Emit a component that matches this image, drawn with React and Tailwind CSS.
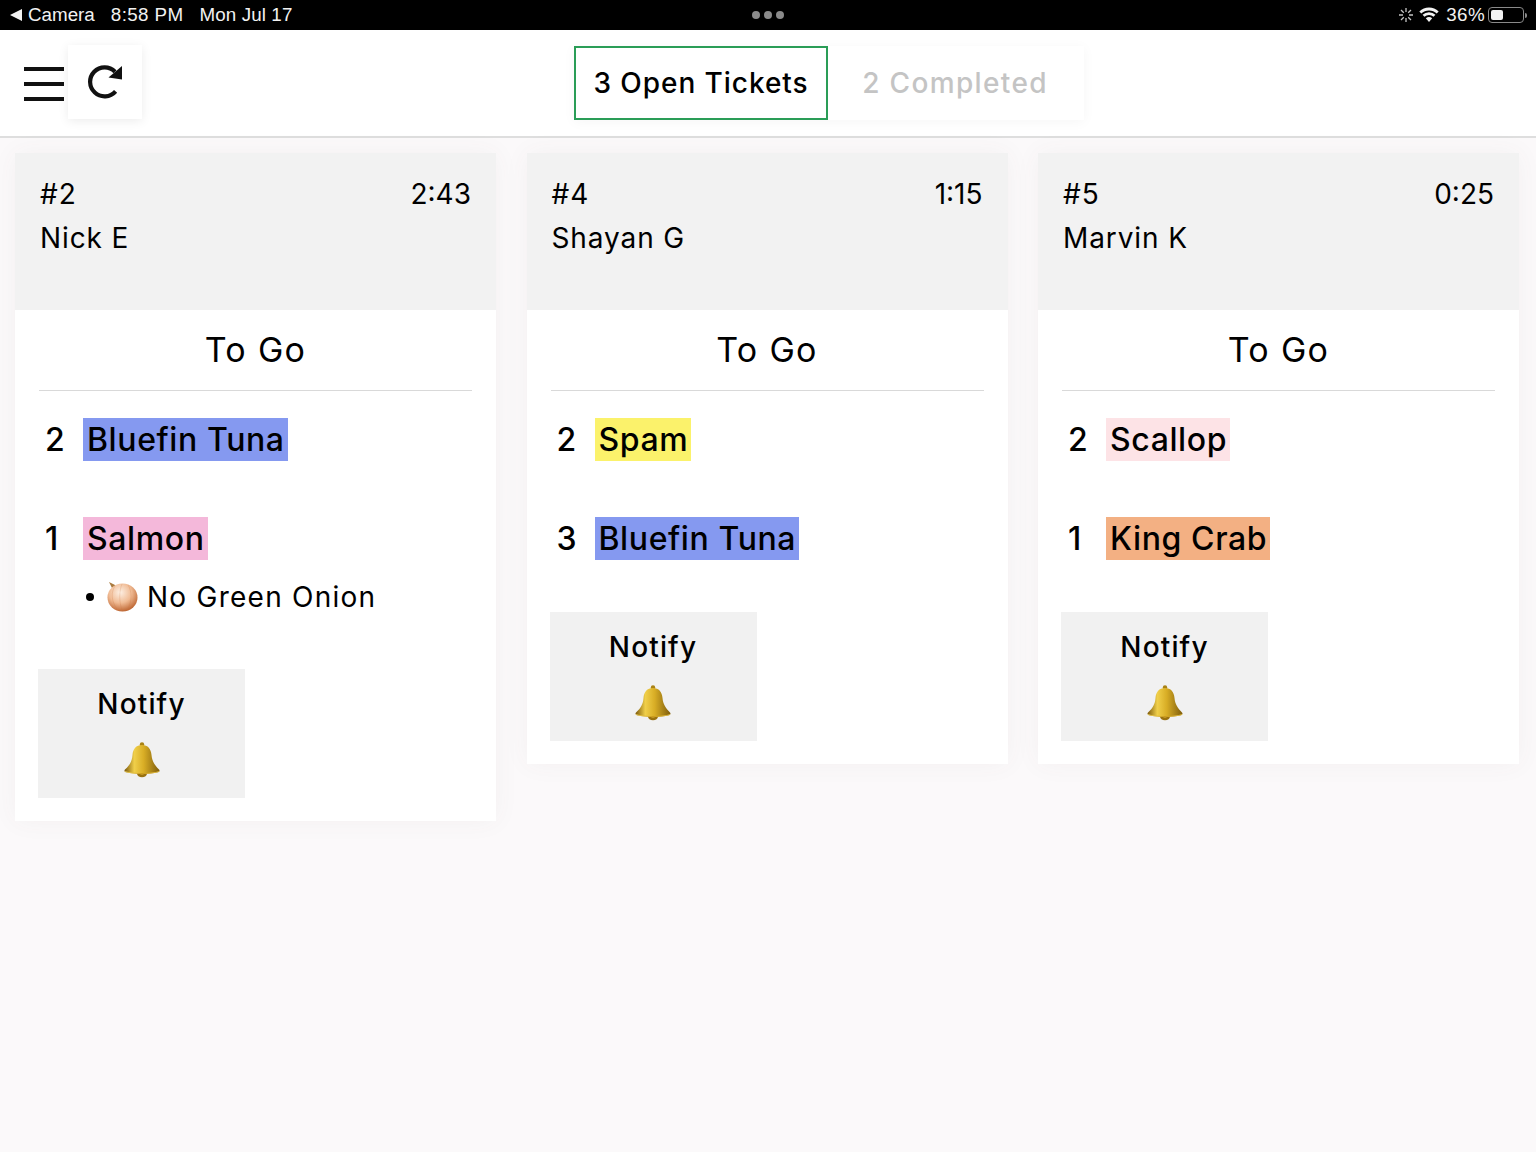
import React from 'react';

const tickets = [
  {
    id: '#2',
    time: '2:43',
    name: 'Nick E',
    items: [
      { qty: 2, label: 'Bluefin Tuna', color: 'bg-[#8599f0]' },
      { qty: 1, label: 'Salmon', color: 'bg-[#f4b8da]', note: 'No Green Onion' },
    ],
  },
  {
    id: '#4',
    time: '1:15',
    name: 'Shayan G',
    items: [
      { qty: 2, label: 'Spam', color: 'bg-[#fbf26b]' },
      { qty: 3, label: 'Bluefin Tuna', color: 'bg-[#8599f0]' },
    ],
  },
  {
    id: '#5',
    time: '0:25',
    name: 'Marvin K',
    items: [
      { qty: 2, label: 'Scallop', color: 'bg-[#fde3e6]' },
      { qty: 1, label: 'King Crab', color: 'bg-[#f3b083]' },
    ],
  },
];

const Bell = () => (
  <svg width="38" height="36" viewBox="0 0 38 36">
    <defs>
      <linearGradient id="bellGold" x1="0" x2="1" y1="0" y2="0">
        <stop offset="0" stopColor="#7d5a0c" />
        <stop offset="0.28" stopColor="#f0cf4a" />
        <stop offset="0.55" stopColor="#d8ad25" />
        <stop offset="1" stopColor="#7f5d0c" />
      </linearGradient>
      <linearGradient id="bellLip" x1="0" x2="1" y1="0" y2="0">
        <stop offset="0" stopColor="#f4d862" />
        <stop offset="0.5" stopColor="#c99a1c" />
        <stop offset="1" stopColor="#f0cc4c" />
      </linearGradient>
    </defs>
    <circle cx="19" cy="2.500" r="2.200" fill="#a98214" />
    <ellipse cx="19" cy="31.500" rx="5" ry="3.800" fill="#9a7210" />
    <ellipse cx="19" cy="31" rx="2.500" ry="1.800" fill="#d6ab2a" />
    <path
      d="M19 3c6 0 9 4 9.500 10 .5 6 3 10 7.500 14.500 1 1.200.5 2.200-1 2.700-9 2.300-23 2.300-32 0-1.500-.5-2-1.500-1-2.700C7 23 9 19 9.500 13 10 7 13 3 19 3z"
      fill="url(#bellGold)"
    />
    <path d="M1.500 29c9 2.800 26 2.800 35 0-.2.700-.8 1-1.500 1.200-9 2.300-23 2.300-32 0-.7-.2-1.300-.5-1.500-1.200z" fill="url(#bellLip)" />
  </svg>
);

const Onion = () => (
  <svg width="32" height="30" viewBox="0 0 32 30">
    <defs>
      <radialGradient id="onionSkin" cx="0.42" cy="0.32" r="0.75">
        <stop offset="0" stopColor="#fdf0e4" />
        <stop offset="0.5" stopColor="#f0bb94" />
        <stop offset="1" stopColor="#b4551f" />
      </radialGradient>
    </defs>
    <path d="M3 0l6 3 3 5-6-2z" fill="#a97a3e" />
    <ellipse cx="16.500" cy="15.500" rx="15" ry="14" fill="url(#onionSkin)" />
    <path d="M9 4c-4 6-4 15 2 23M16 2c-3 7-3 18 0 26M22 3c4 6 4 16 0 24" fill="none" stroke="#c9743e" strokeWidth="0.700" opacity="0.3" />
  </svg>
);

const Ticket = ({ ticket }) => (
  <div className="bg-white shadow-[0_0_24px_rgba(90,70,80,0.05)]">
    <div className="h-[157px] bg-[#f2f2f2] px-[25px] pt-[19px] text-[28px] leading-[44px] tracking-[0.9px] text-black">
      <div className="flex justify-between">
        <span>{ticket.id}</span>
        <span className="tracking-normal">{ticket.time}</span>
      </div>
      <div>{ticket.name}</div>
    </div>
    <div className="px-[24px] pb-[23px]">
      <div className="h-[81px] border-b border-[#d9d9d9] pt-[17px] text-center text-[34px] leading-[46px] tracking-[1.300px] text-black">
        To Go
      </div>
      <div className="flex flex-col gap-[56px] pt-[27px]">
        {ticket.items.map((item) => (
          <div key={item.label}>
            <div className="flex h-[43px] items-center text-[32px] font-[450] tracking-[0.6px] text-black">
              <span className="w-[44px] pl-[6px]">{item.qty}</span>
              <span className={`${item.color} pl-[4px] pr-[3px] leading-[43px]`}>{item.label}</span>
            </div>
            {item.note && (
              <div className="mt-[15px] flex h-[43px] items-center pl-[47px] text-[28px] tracking-[1.250px] text-black">
                <span className="mr-[12px] size-[8px] rounded-full bg-black" />
                <Onion />
                <span className="ml-[9px]">{item.note}</span>
              </div>
            )}
          </div>
        ))}
      </div>
      <div className={`${ticket.items[1].note ? 'mt-[51px]' : 'mt-[52px]'} ml-[-1px] flex h-[129px] w-[207px] flex-col items-center bg-[#f1f1f1] pt-[15px]`}>
        <span className="text-[28px] font-[450] leading-[40px] tracking-[1.150px] text-black">Notify</span>
        <span className="mt-[18px]">
          <Bell />
        </span>
      </div>
    </div>
  </div>
);

const App = () => {
  return (
    <div className="flex min-h-[1152px] flex-col bg-[#fbf9fa] font-['Inter',sans-serif]">
      <div className="relative flex h-[30px] items-center justify-between bg-black pl-[10px] pr-[9px] font-['Liberation_Sans',sans-serif] text-[18.800px] text-[#f2f2f2]">
        <div className="flex items-center">
          <svg width="12" height="12" viewBox="0 0 12 12" className="mr-[6px]">
            <path d="M12 0v12L0 6z" fill="#f2f2f2" />
          </svg>
          <span>Camera</span>
          <span className="ml-[16px] tracking-[0.4px]">8:58 PM</span>
          <span className="ml-[16px] tracking-[0.1px]">Mon Jul 17</span>
        </div>
        <div className="absolute left-[752px] top-[11px] flex gap-[4px]">
          <span className="size-[8px] rounded-full bg-[#8a8a8a]" />
          <span className="size-[8px] rounded-full bg-[#8a8a8a]" />
          <span className="size-[8px] rounded-full bg-[#8a8a8a]" />
        </div>
        <div className="flex items-center">
          <svg width="14" height="14" viewBox="0 0 14 14" stroke="#c4c4c4" strokeWidth="1.300" className="mr-[6px]">
            <path d="M7 0v4M7 10v4M0 7h4M10 7h4M2 2l2.800 2.800M9.200 9.200L12 12M2 12l2.800-2.800M9.200 4.800L12 2" />
          </svg>
          <svg width="20" height="16" viewBox="0 0 20 16" fill="none" stroke="#f2f2f2" strokeWidth="2.800" className="mr-[7px]">
            <path d="M1.300 5.500a12.500 12.500 0 0 1 17.400 0M4.500 8.800a8 8 0 0 1 11 0" />
            <path d="M6.800 11.300a5 5 0 0 1 6.400 0L10 15z" fill="#f2f2f2" stroke="none" />
          </svg>
          <span className="tracking-[0.4px]">36%</span>
          <div className="ml-[3px] flex h-[16px] w-[36px] items-center rounded-[4px] border border-[#8a8a8a] p-[2px]">
            <div className="h-full w-[12px] rounded-[2px] bg-[#f2f2f2]" />
          </div>
          <div className="ml-[1px] h-[5px] w-[2px] rounded-r-sm bg-[#8a8a8a]" />
        </div>
      </div>

      <div className="flex h-[108px] border-b-2 border-[#dedede] bg-white">
        <div className="flex items-start pl-[24px] pt-[15px]">
          <div className="mt-[22px] flex w-[40px] flex-col gap-[11px]">
            <div className="h-[4px] bg-[#111]" />
            <div className="h-[4px] bg-[#111]" />
            <div className="h-[4px] bg-[#111]" />
          </div>
          <div className="ml-[4px] flex size-[74px] items-center justify-center bg-white shadow-[0_2px_10px_rgba(0,0,0,0.08)]">
            <svg width="36" height="36" viewBox="0 0 36 36" className="ml-[1px] mt-[1px]">
              <path d="M27.600 26.300A14.500 14.500 0 1 1 27 6.700" fill="none" stroke="#111" strokeWidth="4.200" />
              <path d="M34 1v13.500L20.500 12.500z" fill="#111" />
            </svg>
          </div>
        </div>
        <div className="ml-[432px] mt-[16px] flex h-[74px] shadow-[0_2px_12px_rgba(0,0,0,0.04)]">
          <div className="flex w-[254px] items-center justify-center border-2 border-[#2a9d57] text-[28px] font-[450] tracking-[0.95px] text-black">
            3 Open Tickets
          </div>
          <div className="flex w-[256px] items-center justify-center pr-[2px] text-[28px] font-[450] tracking-[1.350px] text-[#c4c4c4]">
            2 Completed
          </div>
        </div>
      </div>

      <div className="grid grid-cols-3 items-start gap-x-[30.500px] pl-[15px] pr-[17px] pt-[15px]">
        {tickets.map((ticket) => (
          <Ticket key={ticket.id} ticket={ticket} />
        ))}
      </div>
    </div>
  );
};

export default App;
